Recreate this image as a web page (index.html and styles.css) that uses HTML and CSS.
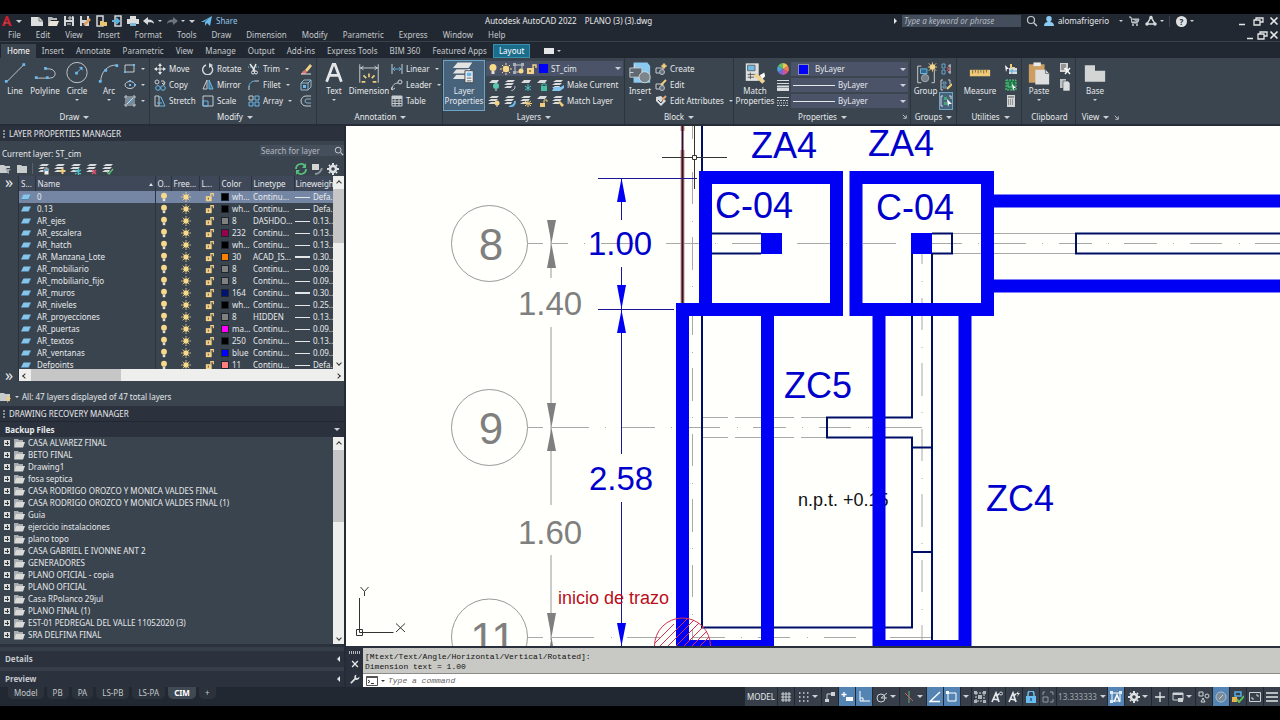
FILE: index.html
```html
<!DOCTYPE html>
<html lang="en">
<head>
    <meta charset="UTF-8">
    <meta name="viewport" content="width=device-width, initial-scale=1.0">
    <title>Autodesk AutoCAD 2022</title>
    <link rel="stylesheet" href="styles.css">
</head>
<body>
    <!-- Icon set -->
    <svg class="sprite" aria-hidden="true">
        <symbol id="logo" viewBox="0 0 12 12"><path d="M1 11L5 1h2l4 10H8L6 4.500 4 11z" fill="#c8202f"/><path d="M3 8h5" stroke="#e0525c"/></symbol>
        <symbol id="new" viewBox="0 0 12 12"><path d="M0 2h8l4 4v5H0z" fill="#dcdedd"/><path d="M8 2v4h4" fill="none" stroke="#777"/></symbol>
        <symbol id="open" viewBox="0 0 12 12"><path d="M1 11V2h4l1 1h4v2H4z" fill="#b9bcbd"/><path d="M3 6h9l-2 5H1z" fill="#e8e5d8"/></symbol>
        <symbol id="save" viewBox="0 0 12 12"><path d="M1 1h9l1 1v9H1z" fill="#d5d8da"/><path d="M3 1h6v4H3zM3 7h6v4H3z" fill="#2a3038"/><path d="M4 9h4M6 2h2v2H6z" stroke="#d5d8da"/></symbol>
        <symbol id="saveas" viewBox="0 0 12 12"><path d="M1 1h9v10H1z" fill="#d5d8da"/><path d="M3 1h5v4H3zM3 8h3v3H3z" fill="#2a3038"/><path d="M5 10l6-6" stroke="#e3a15e" stroke-width="2.500"/></symbol>
        <symbol id="mobile" viewBox="0 0 12 12"><path d="M2 1h6v10H2z" fill="none" stroke="#d5d8da" stroke-width="1.500"/><path d="M5 6h3l1 1h3v4H5z" fill="#e9c56e"/></symbol>
        <symbol id="mobile2" viewBox="0 0 12 12"><path d="M4 1h6v10H4z" fill="none" stroke="#d5d8da" stroke-width="1.500"/><path d="M1 6h6M5 3l3 3-3 3" fill="none" stroke="#5db3df" stroke-width="2"/></symbol>
        <symbol id="print" viewBox="0 0 12 12"><path d="M3 1h6v3H3zM0 4h12v5H0z" fill="#dcdedd"/><path d="M3 8h6v3H3z" fill="#7fb8da"/></symbol>
        <symbol id="undo" viewBox="0 0 12 12"><path d="M0 6l5-4v2.500c4 0 6 1.500 6 4.500-1-1.500-3-2-6-1.500V10z" fill="#d8dbde"/></symbol>
        <symbol id="redo" viewBox="0 0 12 12"><path d="M12 6L7 2v2.500C3 4.500 1 6 1 9c1-1.500 3-2 6-1.500V10z" fill="#6c747d"/></symbol>
        <symbol id="send" viewBox="0 0 12 12"><path d="M0 7L11 1 9 11 6 8l-2 3V7l4-4-5 4z" fill="#69b9ea"/></symbol>
        <symbol id="search" viewBox="0 0 12 12"><circle cx="5" cy="5" r="3.500" fill="none" stroke="#c5c9cd" stroke-width="1.200"/><path d="M8 8l3 3" stroke="#c5c9cd" stroke-width="1.500"/></symbol>
        <symbol id="user" viewBox="0 0 12 12"><path d="M6 1c4 0 3 5 1 6 3 0 4 2 4 4H1c0-2 1-4 4-4-2-1-3-6 1-6z" fill="#8bcbf3"/></symbol>
        <symbol id="cart" viewBox="0 0 12 12"><path d="M1 2h2l1 6h6M4 4h7l-1 3H4" fill="#9ea4aa" stroke="#c9cdd1"/><circle cx="5" cy="10" r="1" fill="#ccc"/><circle cx="9" cy="10" r="1" fill="#ccc"/></symbol>
        <symbol id="adsk" viewBox="0 0 12 12"><path d="M6 2L2 9h8z" fill="none" stroke="#d8dbde" stroke-width="1.500"/><circle cx="6" cy="2.500" r="1.700" fill="#d8dbde"/><circle cx="2" cy="9" r="1.700" fill="#d8dbde"/><circle cx="10" cy="9" r="1.700" fill="#d8dbde"/></symbol>
        <symbol id="min" viewBox="0 0 12 12"><path d="M3 9.500h6" stroke="#e4e6e8" stroke-width="1.500"/></symbol>
        <symbol id="restore" viewBox="0 0 12 12"><path d="M2 5h6v5H2zM4 5V3h7v4H8" fill="none" stroke="#e4e6e8" stroke-width="1.300"/></symbol>
        <symbol id="close" viewBox="0 0 12 12"><path d="M2.500 2.500l7 7M9.500 2.500l-7 7" stroke="#e4e6e8" stroke-width="1.600"/></symbol>

        <symbol id="line" viewBox="0 0 26 26"><path d="M4 22L23 3" stroke="#c7ccd0"/><path d="M2 20h3v3H2zM21 2h3v3h-3z" fill="#69b9ea"/></symbol>
        <symbol id="polyline" viewBox="0 0 26 26"><path d="M4 18h14c8 0 8-9 0-10h-5" fill="none" stroke="#c7ccd0"/><path d="M2 16h3v3H2zM14 16h3v3h-3zM12 6h3v3h-3z" fill="#69b9ea"/></symbol>
        <symbol id="circle" viewBox="0 0 26 26"><circle cx="13" cy="12" r="11" fill="none" stroke="#c7ccd0"/><path d="M13 12l5-5" stroke="#69b9ea"/><path d="M11 11h3v3h-3zM15 6h4v4z" fill="#69b9ea"/></symbol>
        <symbol id="arc" viewBox="0 0 26 26"><path d="M4 22C4 12 11 3 22 4" fill="none" stroke="#c7ccd0"/><path d="M2 20h3v3H2zM8 8h3v3H8zM20 3h3v3h-3z" fill="#69b9ea"/></symbol>
        <symbol id="text" viewBox="0 0 26 26"><path d="M5 22L12 3h2l7 19M8 15h10" fill="none" stroke="#e4e6e8" stroke-width="3"/></symbol>
        <symbol id="dim" viewBox="0 0 26 26"><path d="M3 3v20M23 3v20M3 7h20M7 5L4 7l3 2M19 5l3 2-3 2" fill="none" stroke="#cfd3d6"/><path d="M13 13v4M7 15l3 3M19 15l-3 3M5 22h4M17 22h4" stroke="#f0cd7d" stroke-width="1.800"/></symbol>
        <symbol id="layerprops" viewBox="0 0 26 26"><path d="M6 1h16l-4 6H1zM5 8h15l-3 5H1zM5 14h10v5H1z" fill="#e2e4e4"/><path d="M2 8h15M2 14h15" stroke="#55616c"/><path d="M14 10h9v13h-9z" fill="#f4f4f4" stroke="#3c4650"/><path d="M16 12h5v4h-5z" fill="#68b9e8"/><path d="M16 18h5M16 21h5" stroke="#555"/></symbol>
        <symbol id="insert" viewBox="0 0 26 26"><path d="M6 1h15l3 4v18H6z" fill="#8acaf0"/><path d="M2 7h13v10H2z" fill="#606972" stroke="#c7ccd0"/><circle cx="18" cy="17" r="6" fill="#7c858c" stroke="#d0d4d6"/><path d="M7 3v4M2 12h4" stroke="#d9dcde"/></symbol>
        <symbol id="match" viewBox="0 0 26 26"><path d="M3 2h14v19H3z" fill="#dfe1e1"/><path d="M5 4h8v6H5z" fill="#70bce4" stroke="#59636c"/><path d="M5 14h9M5 17h7M8 12v7" stroke="#555"/><path d="M11 15l4-2 9 8-3 3z" fill="#efd391"/><path d="M18 15l5-3 1 4-3 3z" fill="#fff"/></symbol>
        <symbol id="group" viewBox="0 0 26 26"><path d="M8 5H4v18h4M19 23h3V9" fill="none" stroke="#cfd3d6"/><path d="M7 8h7v5H7z" fill="#30678b" stroke="#71bce8"/><circle cx="12" cy="18" r="4" fill="#77808a" stroke="#a5abb0"/><path d="M20 1v10M15 6h10M16 2l8 8M24 2l-8 8" stroke="#f0cd7d"/><circle cx="20" cy="6" r="3" fill="#f5d78d"/></symbol>
        <symbol id="measure" viewBox="0 0 26 26"><path d="M2 9h22v7H2z" fill="#efc97a"/><path d="M5 9v4M8 9v3M11 9v4M14 9v3M17 9v4M20 9v3" stroke="#7c683d"/></symbol>
        <symbol id="paste" viewBox="0 0 26 26"><path d="M2 3h17v20H2z" fill="#cd9d62"/><path d="M7 1h8v4H7z" fill="#e9eaea"/><path d="M9 9h11l4 4v12H9z" fill="#dedfdf"/><path d="M20 9v4h4" fill="none" stroke="#777"/></symbol>
        <symbol id="base" viewBox="0 0 26 26"><path d="M2 4h11v6h11v12H2z" fill="#d3d5d5"/></symbol>

        <symbol id="rect" viewBox="0 0 12 12"><path d="M1 2h9v7H1z" fill="none" stroke="#c7ccd0"/><path d="M0 8h2v2H0zM9 1h2v2H9z" fill="#69b9ea"/></symbol>
        <symbol id="ellipse" viewBox="0 0 12 12"><ellipse cx="6" cy="6" rx="5" ry="3.500" fill="none" stroke="#c7ccd0"/><path d="M5 5h2v2H5zM5 1h2v2H5zM10 5h2v2h-2z" fill="#69b9ea"/></symbol>
        <symbol id="hatch" viewBox="0 0 12 12"><path d="M2 0v12M10 0v12M0 2h12M0 10h12" stroke="#c7ccd0"/><path d="M3 3h6v6H3z" fill="#718ca3"/><path d="M3 9l6-6" stroke="#b8dff6"/></symbol>
        <symbol id="move" viewBox="0 0 12 12"><path d="M6 1v10M1 6h10" stroke="#e4e6e8"/><path d="M6 0l2 3H4zM6 12l2-3H4zM0 6l3-2v4zM12 6L9 4v4z" fill="#e4e6e8"/></symbol>
        <symbol id="copy" viewBox="0 0 12 12"><circle cx="3" cy="3" r="2" fill="none" stroke="#c7ccd0"/><path d="M7 2h3v3M8 4l2 2 1-3" fill="none" stroke="#c7ccd0"/><circle cx="4" cy="9" r="2.300" fill="none" stroke="#69b9ea"/><circle cx="9" cy="9" r="2.300" fill="none" stroke="#69b9ea"/></symbol>
        <symbol id="stretch" viewBox="0 0 12 12"><path d="M1 1h4v10H1z" fill="none" stroke="#c7ccd0"/><path d="M5 2h2l4 9H5M3 8h5" fill="none" stroke="#69b9ea"/></symbol>
        <symbol id="rotate" viewBox="0 0 12 12"><path d="M9 3a5 5 0 1 1-5-1" fill="none" stroke="#d3d7da" stroke-width="1.400"/><path d="M7 0l4 2-4 3z" fill="#d3d7da"/></symbol>
        <symbol id="mirror" viewBox="0 0 12 12"><path d="M5 1v9H1z" fill="none" stroke="#c7ccd0"/><path d="M7 1v9h4z" fill="#3d708f" stroke="#69b9ea"/></symbol>
        <symbol id="scale" viewBox="0 0 12 12"><path d="M1 1h10v10H1z" fill="none" stroke="#c7ccd0"/><path d="M1 6h5v5H1z" fill="none" stroke="#69b9ea"/></symbol>
        <symbol id="trim" viewBox="0 0 12 12"><path d="M2 1l5 7M8 1L5 8" stroke="#e4e6e8" stroke-width="1.500"/><circle cx="5" cy="9.500" r="1.500" fill="none" stroke="#e4e6e8"/><circle cx="8" cy="9.500" r="1.500" fill="none" stroke="#e4e6e8"/><path d="M0 4h4M8 4h3" stroke="#69b9ea" stroke-dasharray="1 1"/></symbol>
        <symbol id="fillet" viewBox="0 0 12 12"><path d="M1 11V7" stroke="#c7ccd0"/><path d="M1 8c0-4 3-6 6-6" fill="none" stroke="#69b9ea"/><path d="M7 2h4" stroke="#c7ccd0"/></symbol>
        <symbol id="array" viewBox="0 0 12 12"><path d="M1 1h4v4H1z" fill="none" stroke="#c7ccd0"/><path d="M7 1h4v4H7zM1 7h4v4H1zM7 7h4v4H7z" fill="none" stroke="#69b9ea"/></symbol>
        <symbol id="erase" viewBox="0 0 12 12"><path d="M5 7l5-6 2 2-5 6z" fill="#f2d48a"/><path d="M3 8l2-1 2 2-2 2H1z" fill="#e2736e"/><path d="M1 11h10" stroke="#e4e6e8"/></symbol>
        <symbol id="explode" viewBox="0 0 12 12"><path d="M1 4h7v7H1zM1 4l3-3h7L8 4M11 1v7l-3 3" fill="none" stroke="#94b9d0"/><path d="M3 6h3v3H3z" fill="#69b9ea"/></symbol>
        <symbol id="offset" viewBox="0 0 12 12"><path d="M11 1H6a5 5 0 0 0 0 10h5" fill="none" stroke="#c7ccd0"/><path d="M11 4H7a2 2 0 0 0 0 4h4" fill="none" stroke="#89adc5"/></symbol>
        <symbol id="linear" viewBox="0 0 12 12"><path d="M1 1v10M11 1v10" stroke="#c7ccd0"/><path d="M1 6h10M4 4L2 6l2 2M8 4l2 2-2 2" fill="none" stroke="#69a6cc"/></symbol>
        <symbol id="leader" viewBox="0 0 12 12"><path d="M1 11C1 6 4 4 7 4" fill="none" stroke="#c7ccd0"/><circle cx="9" cy="3" r="2" fill="none" stroke="#c7ccd0"/><path d="M0 8l1 3 3-2" fill="none" stroke="#c7ccd0"/></symbol>
        <symbol id="table" viewBox="0 0 12 12"><path d="M1 1h10v10H1zM1 6h10M1 8.500h10M4 3v8M8 3v8" fill="none" stroke="#c7ccd0"/><path d="M1 1h10v3H1z" fill="#c7ccd0"/></symbol>
        <symbol id="layers" viewBox="0 0 12 12"><path d="M4 1h7L9 3H1zM3 4h7L8 6H0zM3 7h5L7 9H0z" fill="#d9dcdd"/></symbol>
        <symbol id="lay-bulb" viewBox="0 0 12 12"><use href="#layers"/><circle cx="9" cy="8" r="2.500" fill="#f5d584"/><path d="M9 10v2" stroke="#ddd"/></symbol>
        <symbol id="lay-on" viewBox="0 0 12 12"><path d="M4 1h7L9 4H1z" fill="#d9dcdd"/><circle cx="8" cy="7" r="3" fill="#59c8ae"/><path d="M8 10v2" stroke="#ddd"/></symbol>
        <symbol id="lay-iso" viewBox="0 0 12 12"><use href="#layers"/><path d="M7 12c3-1 4-2 4-5" fill="none" stroke="#b9c0c6"/></symbol>
        <symbol id="lay-isob" viewBox="0 0 12 12"><use href="#layers"/><path d="M5 12c4-1 6-2 6-6" fill="none" stroke="#69b9ea" stroke-width="2"/></symbol>
        <symbol id="lay-frz" viewBox="0 0 12 12"><path d="M4 1h7L9 4H1z" fill="#d9dcdd"/><path d="M8 5v7M5 7l6 4M11 7l-6 4" stroke="#4cc2c9"/></symbol>
        <symbol id="lay-sun" viewBox="0 0 12 12"><use href="#layers"/><path d="M8 5v7M4 8.500h8M5 6l6 5M11 6l-6 5" stroke="#f0cd7d"/></symbol>
        <symbol id="lay-lock" viewBox="0 0 12 12"><path d="M4 1h7L9 4H1z" fill="#d9dcdd"/><path d="M5 7h6v5H5z" fill="#47bfa5"/><path d="M6 7V5h4v2" fill="none" stroke="#47bfa5"/></symbol>
        <symbol id="lay-unlock" viewBox="0 0 12 12"><path d="M4 1h7L9 4H1z" fill="#d9dcdd"/><path d="M4 8h5v4H4z" fill="#f0cd7d"/><path d="M8 8V5h3v2" fill="none" stroke="#f0cd7d"/></symbol>
        <symbol id="lay-cur" viewBox="0 0 12 12"><use href="#layers"/><path d="M2 8h7l3-2v3l-4 3H0z" fill="#82c6ef"/></symbol>
        <symbol id="lay-match" viewBox="0 0 12 12"><use href="#layers"/><path d="M6 7l2-1 4 4-2 2z" fill="#f0cd7d"/></symbol>
        <symbol id="lay-new" viewBox="0 0 12 12"><use href="#layers"/><path d="M8.500 5v6M5.500 8h6" stroke="#f0cd7d" stroke-width="2"/></symbol>
        <symbol id="lay-newfrz" viewBox="0 0 12 12"><use href="#layers"/><path d="M8.500 5v7M5 7l6 4M11 7l-6 4" stroke="#4cc2c9" stroke-width="1.300"/></symbol>
        <symbol id="lay-del" viewBox="0 0 12 12"><use href="#layers"/><path d="M6 7l4 4M10 7l-4 4" stroke="#e2516e" stroke-width="1.500"/></symbol>
        <symbol id="lay-ok" viewBox="0 0 12 12"><use href="#layers"/><path d="M5 9l2 2 4-5" fill="none" stroke="#5fc077" stroke-width="1.300"/></symbol>
        <symbol id="lay-prop" viewBox="0 0 12 12"><use href="#layers"/><path d="M6 5h5v7H6z" fill="#eee" stroke="#444"/><path d="M7 6h3v2H7z" fill="#56a7d6"/></symbol>
        <symbol id="bulb" viewBox="0 0 12 12"><circle cx="6" cy="4.500" r="3.500" fill="#f8d98a"/><path d="M4.500 8h3v3h-3z" fill="#e6e2d2"/></symbol>
        <symbol id="sun" viewBox="0 0 12 12"><circle cx="6" cy="6" r="3.200" fill="#f8d98a"/><path d="M6 0v2M6 10v2M0 6h2M10 6h2M2 2l1.500 1.500M10 2L8.500 3.500M2 10l1.500-1.500M10 10L8.500 8.500" stroke="#f8d98a"/></symbol>
        <symbol id="unlock" viewBox="0 0 12 12"><path d="M1 5h7v6H1z" fill="#f5d28a"/><path d="M7 5V2h3v3" fill="none" stroke="#f5d28a" stroke-width="1.400"/><path d="M4 7v2" stroke="#6a5a35" stroke-width="1.300"/></symbol>
        <symbol id="vpfrz" viewBox="0 0 12 12"><path d="M2 2h7v7H2z" fill="none" stroke="#c7ccd0"/><path d="M0 0h3v3H0zM8 0h3v3H8zM0 8h3v3H0z" fill="#aab0b6"/><circle cx="8" cy="8" r="2.500" fill="#f8d98a"/></symbol>
        <symbol id="sheet" viewBox="0 0 12 12"><path d="M3 3h9L9 9H0z" fill="#86c6ec"/><path d="M0 9h9l3-6" fill="none" stroke="#4d7f9f"/></symbol>
        <symbol id="create" viewBox="0 0 12 12"><path d="M1 5h7v5H1z" fill="none" stroke="#c7ccd0"/><circle cx="7" cy="9" r="2.500" fill="#68727b" stroke="#b7bcc1"/><circle cx="9" cy="3" r="2" fill="#f0cd7d"/><path d="M9 0v6M6 3h6" stroke="#f0cd7d"/></symbol>
        <symbol id="edit" viewBox="0 0 12 12"><path d="M1 5h7v5H1z" fill="none" stroke="#c7ccd0"/><circle cx="7" cy="9" r="2.500" fill="#68727b" stroke="#b7bcc1"/><path d="M6 6l5-5" stroke="#f0cd7d" stroke-width="2"/></symbol>
        <symbol id="editattr" viewBox="0 0 12 12"><path d="M1 2l5-1 5 5-5 5-5-5z" fill="#d8dbde"/><path d="M3 5l3 3 3-5" fill="none" stroke="#3b444e"/><path d="M7 5l4-4" stroke="#e8a774" stroke-width="2"/></symbol>
        <symbol id="wheel" viewBox="0 0 12 12"><path d="M6 6V0a6 6 0 0 1 5 3z" fill="#f4c04e"/><path d="M6 6l5-3a6 6 0 0 1 0 6z" fill="#ef7c55"/><path d="M6 6l5 3a6 6 0 0 1-5 3z" fill="#d2548e"/><path d="M6 6v6a6 6 0 0 1-5-3z" fill="#7a65d8"/><path d="M6 6L1 9a6 6 0 0 1 0-6z" fill="#4aa3dd"/><path d="M6 6L1 3a6 6 0 0 1 5-3z" fill="#61bd6a"/></symbol>
        <symbol id="weights" viewBox="0 0 12 12"><path d="M0 1.500h12M0 4.500h12" stroke="#d8dbde"/><path d="M0 7.500h12" stroke="#d8dbde" stroke-width="2"/><path d="M0 10.500h12" stroke="#d8dbde" stroke-width="3"/></symbol>
        <symbol id="types" viewBox="0 0 12 12"><path d="M0 2.500h12" stroke="#c7ccd0"/><path d="M0 5.500h12M0 10.500h12" stroke="#c7ccd0" stroke-dasharray="2 1"/><path d="M0 8h12" stroke="#c7ccd0" stroke-dasharray="1 1"/></symbol>
        <symbol id="ungroup" viewBox="0 0 12 12"><path d="M2 1h3v4H2zM2 7h3v4H2z" fill="none" stroke="#69a6cc"/><path d="M10 1v10M8 3h3M8 9h3" stroke="#c7ccd0"/><path d="M7 4l3 4M10 4L7 8" stroke="#d9536a"/></symbol>
        <symbol id="groupedit" viewBox="0 0 12 12"><path d="M3 1H1v10h2M8 1h2v4" fill="none" stroke="#c7ccd0"/><path d="M3 3h3v2H3zM3 7h3v2H3z" fill="none" stroke="#69a6cc"/><path d="M7 10l5-5" stroke="#f0cd7d" stroke-width="2"/></symbol>
        <symbol id="groupsel" viewBox="0 0 12 12"><path d="M3 1H1v10h2M9 1h2v3" fill="none" stroke="#d8dbde"/><path d="M4 2h3v3H4zM4 7h3v3H4z" fill="#46a678"/><path d="M7 4l5 5H9l-1 3z" fill="#fff"/></symbol>
        <symbol id="quick" viewBox="0 0 12 12"><path d="M0 2l4 4H2l-1 3z" fill="#fff"/><path d="M6 1v4h4" fill="none" stroke="#f0cd7d" stroke-width="2"/><path d="M4 5h8v6H4z" fill="#d9dcdd"/><path d="M7 6v5M4 8h8" stroke="#5ba6d1"/></symbol>
        <symbol id="selall" viewBox="0 0 12 12"><path d="M1 1h10v10H1z" fill="#22764a" stroke="#5acb87" stroke-dasharray="2 1"/><path d="M3 3v5h4V3" fill="none" stroke="#5acb87"/><path d="M7 5l4 4H9l-1 3z" fill="#fff"/></symbol>
        <symbol id="calc" viewBox="0 0 12 12"><path d="M2 0h8v12H2z" fill="#d3d5d5"/><path d="M3 2h6" stroke="#555"/><path d="M3 5h6M3 7h6M3 9h6" stroke="#555" stroke-dasharray="1 1"/></symbol>
        <symbol id="cut" viewBox="0 0 12 12"><path d="M1 0h8v9H1z" fill="#d3d5d5"/><path d="M2 2h5M2 4h5M2 6h3" stroke="#555"/><path d="M6 5l5 6M11 5l-5 6" stroke="#fff" stroke-width="1.300"/></symbol>
        <symbol id="pages" viewBox="0 0 12 12"><path d="M1 0h6v9H1z" fill="#bfc2c4"/><path d="M4 2h5l2 2v8H4z" fill="#dcdede" stroke="#3b444e" stroke-width=".6"/></symbol>
        <symbol id="launch" viewBox="0 0 12 12"><path d="M3 3l5 5M9 4v5H4" fill="none" stroke="#cdd1d5" stroke-width="1.500"/></symbol>

        <symbol id="filter" viewBox="0 0 12 12"><path d="M0 2h4l1 1h5v2H6l2 2v3H0z" fill="#c9cccd"/><path d="M5 6h6L9 8v3L7 10V8z" fill="#9ca2a8"/></symbol>
        <symbol id="folder" viewBox="0 0 12 12"><path d="M1 2h4l1 1h5v7H1z" fill="#c9cccd"/></symbol>
        <symbol id="folderopen" viewBox="0 0 12 12"><path d="M1 10V2h4l1 1h4v2H4z" fill="#a9adb0"/><path d="M3 5h9l-2 5.500H1z" fill="#d9dad8"/></symbol>
        <symbol id="folderbolt" viewBox="0 0 12 12"><path d="M0 2h4l1 1h5v7H0z" fill="#c9cccd"/><path d="M9 4L6 8h2l-1 4 4-5H9z" fill="#f5cf6a"/></symbol>
        <symbol id="refresh" viewBox="0 0 12 12"><path d="M1 6a5 5 0 0 1 9-3M11 6a5 5 0 0 1-9 3" fill="none" stroke="#58bf7c" stroke-width="1.800"/><path d="M11 0v5H7zM1 12V7h4z" fill="#58bf7c"/></symbol>
        <symbol id="settings" viewBox="0 0 12 12"><path d="M1 1h7v6H1z" fill="#d3d5d5"/><path d="M4 11c4 0 6-3 7-6" fill="none" stroke="#8c949c" stroke-width="2"/></symbol>
        <symbol id="gear" viewBox="0 0 12 12"><circle cx="6" cy="6" r="3" fill="none" stroke="#dfe2e4" stroke-width="2.400"/><path d="M6 0v2M6 10v2M0 6h2M10 6h2M2 2l1 1M9 9l1 1M10 2L9 3M3 9l-1 1" stroke="#dfe2e4" stroke-width="2"/></symbol>
        <symbol id="wrench" viewBox="0 0 12 12"><path d="M1 11l6-6" stroke="#dfe2e4" stroke-width="2"/><path d="M11 3a3 3 0 1 1-3-2L7 3l1 2 2-.5z" fill="#dfe2e4"/></symbol>
        <symbol id="prompt" viewBox="0 0 12 12"><path d="M.5 1.500h11v9H.5z" fill="#fff" stroke="#555"/><path d="M.5 2h11" stroke="#555" stroke-width="2"/><path d="M2 5l2 1.500L2 8M5 8.500h3" fill="none" stroke="#333"/></symbol>

        <symbol id="s-grid" viewBox="0 0 12 12"><path d="M3 1v10M6 1v10M9 1v10M1 3h10M1 6h10M1 9h10" stroke="#cfd3d6"/></symbol>
        <symbol id="s-snap" viewBox="0 0 12 12"><path d="M1 2h10M1 6h10M1 10h10" stroke="#cfd3d6" stroke-width="1.500" stroke-dasharray="1.500 2.500"/></symbol>
        <symbol id="s-infer" viewBox="0 0 12 12"><path d="M1 8h4v3H1zM7 1h4v4H7z" fill="#cfd3d6"/><path d="M3 8V3h4" fill="none" stroke="#cfd3d6"/></symbol>
        <symbol id="s-dyn" viewBox="0 0 12 12"><path d="M3 1v5M.5 3.500h5" stroke="#fff" stroke-width="1.300"/><path d="M5 6h7v4H5z" fill="#fff"/></symbol>
        <symbol id="s-ortho" viewBox="0 0 12 12"><path d="M2 0v10h10M2 7h3v3" fill="none" stroke="#fff"/></symbol>
        <symbol id="s-polar" viewBox="0 0 12 12"><circle cx="5" cy="7" r="4" fill="none" stroke="#cfd3d6"/><path d="M5 7l6-5M5 7h6" stroke="#cfd3d6"/></symbol>
        <symbol id="s-iso" viewBox="0 0 12 12"><path d="M6 0v12" stroke="#64b36d"/><path d="M2 2l8 8" stroke="#c96568"/></symbol>
        <symbol id="s-track" viewBox="0 0 12 12"><path d="M11 1L1 10.500h10" fill="none" stroke="#fff" stroke-width="1.300"/></symbol>
        <symbol id="s-osnap" viewBox="0 0 12 12"><path d="M2 2h8v8H2z" fill="none" stroke="#fff"/><path d="M0 0h3v3H0z" fill="#fff"/></symbol>
        <symbol id="s-sel" viewBox="0 0 12 12"><path d="M2 2h8v8H2z" fill="none" stroke="#cfd3d6" stroke-dasharray="2 1"/><path d="M0 0h3v3H0zM9 0h3v3H9zM0 9h3v3H0zM9 9h3v3H9zM4 4h4v4H4z" fill="#aeb4ba"/></symbol>
        <symbol id="s-anno" viewBox="0 0 12 12"><path d="M1 11L5 2l3 9M3 8l4 1M5 5l3-2" fill="none" stroke="#e4e6e8" stroke-width="1.700"/><circle cx="10" cy="2.500" r="1.500" fill="none" stroke="#cfd3d6"/></symbol>
        <symbol id="s-annoauto" viewBox="0 0 12 12"><path d="M1 11L5 2l3 9M3 8l4 1M5 5l3-2" fill="none" stroke="#e4e6e8" stroke-width="1.700"/><path d="M10.500 0L8 3h2L9 6l3-4h-2z" fill="#e4e6e8"/></symbol>
        <symbol id="s-lock" viewBox="0 0 12 12"><path d="M1 5h10v7H1z" fill="#69bdf0"/><path d="M3 5V3a3 3 0 0 1 6 0v2" fill="none" stroke="#69bdf0" stroke-width="1.500"/><path d="M6 7v3" stroke="#275a7e" stroke-width="1.500"/></symbol>
        <symbol id="s-scale" viewBox="0 0 12 12"><path d="M3 1H1v3M8 1h3v3M11 8v3H8M1 6h5v5H1z" fill="none" stroke="#9299a0"/></symbol>
        <symbol id="s-auto" viewBox="0 0 12 12"><path d="M2 2h8v8H2z" fill="none" stroke="#fff"/><path d="M0 0h3v3H0zM9 0h3v3H9zM0 9h3v3H0z" fill="#dcebf7"/><path d="M4 11l3-7 3 7" fill="none" stroke="#fff" stroke-width="1.500"/></symbol>
        <symbol id="s-plus" viewBox="0 0 12 12"><path d="M6 1v10M1 6h10" stroke="#e4e6e8" stroke-width="1.300"/></symbol>
        <symbol id="s-win" viewBox="0 0 12 12"><path d="M1 2h10v7H1z" fill="none" stroke="#cfd3d6"/><path d="M1 2h10v2H1z" fill="#cfd3d6"/><path d="M6 7h5v4H6z" fill="#cfd3d6"/></symbol>
        <symbol id="s-units" viewBox="0 0 12 12"><path d="M1 1h4v4H1zM3 11l2-4 2 4z" fill="none" stroke="#cfd3d6"/><circle cx="9" cy="5" r="2" fill="none" stroke="#cfd3d6"/></symbol>
        <symbol id="s-circ" viewBox="0 0 12 12"><circle cx="6" cy="6" r="5" fill="#7c8b98" stroke="#a9bfd3"/><path d="M4 8l4-4" stroke="#c7d6e3"/></symbol>
        <symbol id="s-hw" viewBox="0 0 12 12"><path d="M3 1h6v4H3z" fill="none" stroke="#5aaee0" stroke-width="1.500"/><path d="M0 6h5v5H0z" fill="#e8b64c"/><path d="M5 8l2 3 5-6" fill="none" stroke="#5fc35f" stroke-width="1.800"/></symbol>
        <symbol id="s-full" viewBox="0 0 12 12"><path d="M.5 1.500h11v9H.5z" fill="none" stroke="#cfd3d6"/><path d="M7 4h2v2M3 6v2h2" fill="none" stroke="#cfd3d6"/></symbol>
        <symbol id="s-menu" viewBox="0 0 12 12"><path d="M0 2h12M0 6h12M0 10h12" stroke="#e4e6e8" stroke-width="1.400"/></symbol>
    </svg>

    <div class="app">
        <header class="titlebar">
            <div class="quick">
                <button class="logo" aria-label="Application menu"><svg class="ic"><use href="#logo"/></svg><i class="caret"></i></button>
                <button aria-label="New"><svg class="ic"><use href="#new"/></svg></button>
                <button aria-label="Open"><svg class="ic"><use href="#open"/></svg></button>
                <button aria-label="Save"><svg class="ic"><use href="#save"/></svg></button>
                <button aria-label="Save as"><svg class="ic"><use href="#saveas"/></svg></button>
                <button aria-label="Open from mobile"><svg class="ic"><use href="#mobile"/></svg></button>
                <button aria-label="Save to mobile"><svg class="ic"><use href="#mobile2"/></svg></button>
                <button aria-label="Plot"><svg class="ic"><use href="#print"/></svg></button>
                <button aria-label="Undo"><svg class="ic"><use href="#undo"/></svg><i class="caret small"></i></button>
                <button aria-label="Redo"><svg class="ic"><use href="#redo"/></svg><i class="caret small"></i></button>
                <button aria-label="Customize"><i class="caret"></i></button>
                <button class="share"><svg class="ic"><use href="#send"/></svg>Share</button>
            </div>
            <div class="doc-title"><span>Autodesk AutoCAD 2022</span><span>PLANO (3) (3).dwg</span></div>
            <div class="account">
                <i class="caret right"></i>
                <input type="text" placeholder="Type a keyword or phrase" aria-label="Search help">
                <button aria-label="Search"><svg class="ic"><use href="#search"/></svg></button>
                <button class="user"><svg class="ic"><use href="#user"/></svg>alomafrigerio<i class="caret small"></i></button>
                <button aria-label="Store"><svg class="ic"><use href="#cart"/></svg></button>
                <button aria-label="Apps"><svg class="ic"><use href="#adsk"/></svg><i class="caret small"></i></button>
                <button class="help" aria-label="Help"><b>?</b><i class="caret small"></i></button>
                <div class="window-buttons">
                    <button aria-label="Minimize"><svg class="ic"><use href="#min"/></svg></button>
                    <button aria-label="Restore"><svg class="ic"><use href="#restore"/></svg></button>
                    <button aria-label="Close"><svg class="ic"><use href="#close"/></svg></button>
                </div>
            </div>
        </header>

        <nav class="menubar">
            <a href="#">File</a><a href="#">Edit</a><a href="#">View</a><a href="#">Insert</a><a href="#">Format</a><a href="#">Tools</a><a href="#">Draw</a><a href="#">Dimension</a><a href="#">Modify</a><a href="#">Parametric</a><a href="#">Express</a><a href="#">Window</a><a href="#">Help</a>
            <div class="doc-buttons">
                <button aria-label="Minimize drawing"><svg class="ic"><use href="#min"/></svg></button>
                <button aria-label="Restore drawing"><svg class="ic"><use href="#restore"/></svg></button>
                <button aria-label="Close drawing"><svg class="ic"><use href="#close"/></svg></button>
            </div>
        </nav>

        <nav class="tabs">
            <button class="active">Home</button><button>Insert</button><button>Annotate</button><button>Parametric</button><button>View</button><button>Manage</button><button>Output</button><button>Add-ins</button><button>Express Tools</button><button>BIM 360</button><button>Featured Apps</button><button class="context">Layout</button>
            <button class="collapse" aria-label="Minimize ribbon"><span></span><i class="caret small"></i></button>
        </nav>

        <section class="ribbon">
            <div class="panel p-draw">
                <div class="panel-body">
                    <button class="big"><svg><use href="#line"/></svg>Line</button>
                    <button class="big"><svg><use href="#polyline"/></svg>Polyline</button>
                    <button class="big wide"><svg><use href="#circle"/></svg>Circle<i class="caret small"></i></button>
                    <button class="big"><svg><use href="#arc"/></svg>Arc<i class="caret small"></i></button>
                    <div class="col">
                        <button aria-label="Rectangle"><svg class="ic"><use href="#rect"/></svg><i class="caret small"></i></button>
                        <button aria-label="Ellipse"><svg class="ic"><use href="#ellipse"/></svg><i class="caret small"></i></button>
                        <button aria-label="Hatch"><svg class="ic"><use href="#hatch"/></svg><i class="caret small"></i></button>
                    </div>
                </div>
                <div class="panel-title">Draw<i class="caret"></i></div>
            </div>
            <div class="panel p-modify">
                <div class="panel-body">
                    <div class="col w48">
                        <button><svg class="ic"><use href="#move"/></svg>Move</button>
                        <button><svg class="ic"><use href="#copy"/></svg>Copy</button>
                        <button><svg class="ic"><use href="#stretch"/></svg>Stretch</button>
                    </div>
                    <div class="col w46">
                        <button><svg class="ic"><use href="#rotate"/></svg>Rotate</button>
                        <button><svg class="ic"><use href="#mirror"/></svg>Mirror</button>
                        <button><svg class="ic"><use href="#scale"/></svg>Scale</button>
                    </div>
                    <div class="col w46">
                        <button><svg class="ic"><use href="#trim"/></svg>Trim<i class="caret small"></i></button>
                        <button><svg class="ic"><use href="#fillet"/></svg>Fillet<i class="caret small"></i></button>
                        <button><svg class="ic"><use href="#array"/></svg>Array<i class="caret small"></i></button>
                    </div>
                    <div class="col end">
                        <button aria-label="Erase"><svg class="ic"><use href="#erase"/></svg></button>
                        <button aria-label="Explode"><svg class="ic"><use href="#explode"/></svg></button>
                        <button aria-label="Offset"><svg class="ic"><use href="#offset"/></svg></button>
                    </div>
                </div>
                <div class="panel-title">Modify<i class="caret"></i></div>
            </div>
            <div class="panel p-annotation">
                <div class="panel-body">
                    <button class="big"><svg><use href="#text"/></svg>Text<i class="caret small"></i></button>
                    <button class="big wider"><svg><use href="#dim"/></svg>Dimension</button>
                    <div class="col">
                        <button><svg class="ic"><use href="#linear"/></svg>Linear<i class="caret small"></i></button>
                        <button><svg class="ic"><use href="#leader"/></svg>Leader<i class="caret small"></i></button>
                        <button><svg class="ic"><use href="#table"/></svg>Table</button>
                    </div>
                </div>
                <div class="panel-title">Annotation<i class="caret"></i></div>
            </div>
            <div class="panel p-layers">
                <div class="panel-body">
                    <button class="big wider on"><svg><use href="#layerprops"/></svg>Layer<br>Properties</button>
                    <div class="layer-tools">
                        <div class="combo">
                            <svg class="ic"><use href="#bulb"/></svg><svg class="ic"><use href="#sun"/></svg><svg class="ic"><use href="#vpfrz"/></svg><svg class="ic"><use href="#unlock"/></svg>
                            <span class="swatch blue"></span>
                            <select aria-label="Current layer"><option>ST_cim</option></select><i class="caret"></i>
                        </div>
                        <div class="tool-row">
                            <button aria-label="Off"><svg class="ic"><use href="#lay-on"/></svg></button>
                            <button aria-label="Isolate"><svg class="ic"><use href="#lay-iso"/></svg></button>
                            <button aria-label="Freeze"><svg class="ic"><use href="#lay-frz"/></svg></button>
                            <button aria-label="Lock"><svg class="ic"><use href="#lay-lock"/></svg></button>
                            <button><svg class="ic"><use href="#lay-cur"/></svg>Make Current</button>
                        </div>
                        <div class="tool-row">
                            <button aria-label="Turn all on"><svg class="ic"><use href="#lay-bulb"/></svg></button>
                            <button aria-label="Unisolate"><svg class="ic"><use href="#lay-isob"/></svg></button>
                            <button aria-label="Thaw all"><svg class="ic"><use href="#lay-sun"/></svg></button>
                            <button aria-label="Unlock"><svg class="ic"><use href="#lay-unlock"/></svg></button>
                            <button><svg class="ic"><use href="#lay-match"/></svg>Match Layer</button>
                        </div>
                    </div>
                </div>
                <div class="panel-title">Layers<i class="caret"></i></div>
            </div>
            <div class="panel p-block">
                <div class="panel-body">
                    <button class="big"><svg><use href="#insert"/></svg>Insert<i class="caret small"></i></button>
                    <div class="col">
                        <button><svg class="ic"><use href="#create"/></svg>Create</button>
                        <button><svg class="ic"><use href="#edit"/></svg>Edit</button>
                        <button><svg class="ic"><use href="#editattr"/></svg>Edit Attributes<i class="caret small"></i></button>
                    </div>
                </div>
                <div class="panel-title">Block<i class="caret"></i></div>
            </div>
            <div class="panel p-properties">
                <div class="panel-body">
                    <button class="big wider"><svg><use href="#match"/></svg>Match<br>Properties</button>
                    <div class="props">
                        <div class="prop-row"><svg class="ic"><use href="#wheel"/></svg><div class="combo"><span class="swatch blue"></span><select aria-label="Object color"><option>ByLayer</option></select><i class="caret"></i></div></div>
                        <div class="prop-row"><svg class="ic"><use href="#weights"/></svg><div class="combo"><span class="rule"></span><select aria-label="Lineweight"><option>ByLayer</option></select><i class="caret"></i></div></div>
                        <div class="prop-row"><svg class="ic"><use href="#types"/></svg><div class="combo"><span class="rule"></span><select aria-label="Linetype"><option>ByLayer</option></select><i class="caret"></i></div></div>
                    </div>
                </div>
                <div class="panel-title">Properties<i class="caret"></i></div>
                <button class="launcher" aria-label="Properties palette"><svg><use href="#launch"/></svg></button>
            </div>
            <div class="panel p-groups">
                <div class="panel-body">
                    <button class="big"><svg><use href="#group"/></svg>Group</button>
                    <div class="col end">
                        <button aria-label="Ungroup"><svg class="ic"><use href="#ungroup"/></svg></button>
                        <button aria-label="Group edit"><svg class="ic"><use href="#groupedit"/></svg></button>
                        <button class="on" aria-label="Group selection"><svg class="ic"><use href="#groupsel"/></svg></button>
                    </div>
                </div>
                <div class="panel-title">Groups<i class="caret"></i></div>
            </div>
            <div class="panel p-utilities">
                <div class="panel-body">
                    <button class="big wider"><svg><use href="#measure"/></svg>Measure<i class="caret small"></i></button>
                    <div class="col end">
                        <button aria-label="Quick select"><svg class="ic"><use href="#quick"/></svg></button>
                        <button aria-label="Select all"><svg class="ic"><use href="#selall"/></svg></button>
                        <button aria-label="Calculator"><svg class="ic"><use href="#calc"/></svg></button>
                    </div>
                </div>
                <div class="panel-title">Utilities<i class="caret"></i></div>
            </div>
            <div class="panel p-clipboard">
                <div class="panel-body">
                    <button class="big"><svg><use href="#paste"/></svg>Paste<i class="caret small"></i></button>
                    <div class="col end">
                        <button aria-label="Cut"><svg class="ic"><use href="#cut"/></svg></button>
                        <button aria-label="Copy clip"><svg class="ic"><use href="#pages"/></svg></button>
                    </div>
                </div>
                <div class="panel-title">Clipboard</div>
            </div>
            <div class="panel p-view">
                <div class="panel-body">
                    <button class="big"><svg><use href="#base"/></svg>Base<i class="caret small"></i></button>
                </div>
                <div class="panel-title">View<i class="caret"></i><svg><use href="#launch"/></svg></div>
            </div>
        </section>

        <main class="workspace">
            <aside class="palettes">
                <h2 class="palette-title"><i class="handle"></i>LAYER PROPERTIES MANAGER</h2>
                <div class="layer-head">
                    <span>Current layer: ST_cim</span>
                    <label class="layer-search"><input type="text" placeholder="Search for layer" aria-label="Search for layer"><svg class="ic"><use href="#search"/></svg></label>
                </div>
                <div class="layer-toolbar">
                    <button aria-label="New property filter"><svg class="ic"><use href="#filter"/></svg></button>
                    <button aria-label="New group filter"><svg class="ic"><use href="#folder"/></svg></button>
                    <i class="sep"></i>
                    <button aria-label="Layer states"><svg class="ic"><use href="#lay-prop"/></svg></button>
                    <button aria-label="New layer"><svg class="ic"><use href="#lay-new"/></svg></button>
                    <button aria-label="New frozen layer"><svg class="ic"><use href="#lay-newfrz"/></svg></button>
                    <button aria-label="Delete layer"><svg class="ic"><use href="#lay-del"/></svg></button>
                    <button aria-label="Set current"><svg class="ic"><use href="#lay-ok"/></svg></button>
                    <button class="push" aria-label="Refresh"><svg class="ic"><use href="#refresh"/></svg></button>
                    <button aria-label="Overrides"><svg class="ic"><use href="#settings"/></svg></button>
                    <button aria-label="Settings"><svg class="ic"><use href="#gear"/></svg></button>
                </div>
                <div class="layer-area">
                    <div class="filter-strip"><span>&raquo;</span><span>&raquo;</span></div>
                    <div class="layer-list">
                        <div class="list-view">
                            <div class="table-clip">
                                <table>
                                    <colgroup><col class="c-status"><col class="c-name"><col class="c-on"><col class="c-freeze"><col class="c-lock"><col class="c-color"><col class="c-type"><col class="c-weight"></colgroup>
                                    <thead><tr><th>S...</th><th class="sorted">Name</th><th>O...</th><th>Free...</th><th>L...</th><th>Color</th><th>Linetype</th><th>Lineweigh</th></tr></thead>
                                    <tbody id="layerRows"></tbody>
                                </table>
                            </div>
                            <div class="vscroll"><i class="chev up"></i><span class="thumb"></span><i class="chev down"></i></div>
                        </div>
                        <div class="hscroll"><i class="chev left"></i><span class="thumb"></span><i class="chev right"></i></div>
                    </div>
                </div>
                <div class="layer-foot"><svg class="ic"><use href="#folderbolt"/></svg><i class="caret small"></i><span>All: 47 layers displayed of 47 total layers</span></div>

                <h2 class="palette-title"><i class="handle"></i>DRAWING RECOVERY MANAGER</h2>
                <h3 class="section-title">Backup Files<i class="caret"></i></h3>
                <div class="list-view backup">
                    <ul id="backupFiles"></ul>
                    <div class="vscroll"><i class="chev up"></i><span class="thumb"></span><i class="chev down"></i></div>
                </div>
                <h3 class="section-title closed">Details<i class="caret left"></i></h3>
                <h3 class="section-title closed">Preview<i class="caret left"></i></h3>
            </aside>

            <div class="stage">
                <svg class="drawing" viewBox="346 126 934 520" preserveAspectRatio="xMinYMin slice" role="img" aria-label="Foundation plan">
                    <!-- axes -->
                    <g class="axis">
                        <path d="M528 243.500h15M551 243.500h17M584 243.500h1M601 243.500h33M666 243.500h34M715 243.500h1M732 243.500h33M797 243.500h35M846 243.500h1M863 243.500h33M932 243.500h30M978 243.500h1M994 243.500h32M1042 243.500h1M1059 243.500h33M1108 243.500h1M1124 243.500h33M1173 243.500h1M1190 243.500h32M1239 243.500h1M1255 243.500h25"/>
                        <path d="M528 427.500h15M551 427.500h38M605 427.500h1M622 427.500h33M671 427.500h1M688 427.500h32M737 427.500h1M753 427.500h33M802 427.500h1M819 427.500h32M868 427.500h1M885 427.500h37"/>
                        <path d="M528 637.500h15M551 637.500h43M611 637.500h1M627 637.500h33M676 637.500h1M692 637.500h33M741 637.500h1M758 637.500h32M807 637.500h1M824 637.500h32M890 637.500h41"/>
                        <path d="M692.500 126v13M692.500 172v32M692.500 221v1M692.500 237v33M692.500 286v1M692.500 303v32M692.500 352v1M692.500 368v33M692.500 417v1M692.500 434v32M692.500 483v1M692.500 499v33M692.500 548v1M692.500 565v32M692.500 614v1M692.500 630v10"/>
                        <path d="M922 254v10M922 281v1M922 298v32M922 347v1M922 363v33M922 412v1M922 429v32M922 478v1M922 494v33M922 543v1M922 560v32M922 609v1M922 625v15"/>
                        <path d="M952 233.500h124M952 253.500h124" />
                        <path d="M702 417.500h125M702 437.500h125" stroke-dasharray="26 7"/>
                    </g>
                    <!-- grid bubbles and grey dimensions -->
                    <g class="bubble">
                        <circle cx="489.500" cy="243.500" r="38"/><circle cx="489.500" cy="427.500" r="38"/><circle cx="489.500" cy="637" r="38"/>
                        <path d="M551 220v58M551 327v178M551 555v85"/>
                    </g>
                    <path class="grey-fill" d="M547 220h9l-4.500 23zM547 268h9l-4.500-24zM547 403h9l-4.500 24zM547 451h9l-4.500-23zM547 613h9l-4.500 24zM550 646l1.500-9 1.500 9z"/>
                    <g class="grey-text">
                        <text class="axis-no" x="491" y="260">8</text><text class="axis-no" x="491" y="444">9</text><text class="axis-no" x="493" y="654">11</text>
                        <text class="dim-no" x="550" y="315">1.40</text><text class="dim-no" x="550" y="544">1.60</text>
                    </g>
                    <text class="note" x="798" y="506">n.p.t. +0.15</text>
                    <!-- walls -->
                    <path d="M682.500 126v5M682.500 150v153" stroke="#c39a84" stroke-width="4"/>
                    <path d="M682.500 126v177" stroke="#3b0e31" stroke-width="2"/>
                    <path class="wall" d="M702 126v501.500h210V437.500h-85V417.500h85V253M932 253v387M712 233.500h49M712 253.500h49M932 233.500h20v20h-20M912 447.500h20M912 552h20M1280 233.500h-204v20h204"/>
                    <!-- footings -->
                    <g class="footing">
                        <rect x="705.500" y="177.500" width="131" height="132"/>
                        <rect x="856" y="177.500" width="131.500" height="132"/>
                        <path d="M682.500 303v343.500h85V309M879 309v337.500h86V309M676 309.500h30M994 201h286M994 286h286"/>
                    </g>
                    <path class="column" d="M761 233h21v21h-21zM911 233h21v21h-21z"/>
                    <!-- blue dimensions -->
                    <path class="dim" d="M598 178.500h99M598 309.500h76M621.500 178v42M621.500 267v187M621.500 502v144"/>
                    <path class="column" d="M617 202h9l-4.500-24zM617 285h9l-4.500 24zM617 333h9l-4.500-23zM617 623h9l-4.500 23z"/>
                    <g class="blue-text">
                        <text class="dim-no" x="620" y="255">1.00</text><text class="dim-no" x="621" y="490">2.58</text>
                        <text x="751" y="158">ZA4</text><text x="868" y="156">ZA4</text><text x="715" y="218">C-04</text><text x="876" y="220">C-04</text><text x="784" y="398">ZC5</text><text x="986" y="511">ZC4</text>
                    </g>
                    <!-- start point -->
                    <g class="start">
                        <circle cx="682.500" cy="646" r="28"/>
                        <path d="M655 643l19-19M657 649l30-30M665 649l29-29M673 649l26-26M681 649l22-22M689 649l18-18M697 649l12-12"/>
                        <text x="558" y="604">inicio de trazo</text>
                    </g>
                    <!-- UCS icon and crosshair -->
                    <g class="cursor">
                        <path d="M359.500 598v34.500h34M356.500 629.500h6v6h-6zM360.500 587l4 4.500 4-4.500M364.500 591.500v4.500M396 623.500l9 8.500M405 623.500l-9 8.500"/>
                        <path d="M662 157.500h30M697 157.500h30M694.500 126v29M694.500 160v29M692.500 155.500h4v4h-4z"/>
                    </g>
                </svg>
                <div class="command">
                    <div class="command-side"><i class="grip"></i><button aria-label="Close command line"><svg class="ic"><use href="#close"/></svg></button><button aria-label="Customize"><svg class="ic"><use href="#wrench"/></svg></button></div>
                    <div class="command-main">
                        <div class="history">[Mtext/Text/Angle/Horizontal/Vertical/Rotated]:<br>Dimension text = 1.00</div>
                        <div class="command-line"><svg class="ic"><use href="#prompt"/></svg><i class="caret small"></i><input type="text" placeholder="Type a command" aria-label="Command"></div>
                    </div>
                </div>
            </div>
        </main>

        <footer class="statusbar">
            <div class="layouts">
                <button>Model</button><button>PB</button><button>PA</button><button>LS-PB</button><button>LS-PA</button><button class="active">CIM</button><button>+</button>
            </div>
            <div class="tray">
                <button class="label">MODEL</button>
                <button aria-label="Grid"><svg class="ic"><use href="#s-grid"/></svg></button>
                <button class="drop" aria-label="Snap"><svg class="ic"><use href="#s-snap"/></svg><i class="caret"></i></button>
                <button aria-label="Infer constraints"><svg class="ic"><use href="#s-infer"/></svg></button>
                <button class="on" aria-label="Dynamic input"><svg class="ic"><use href="#s-dyn"/></svg></button>
                <button class="on" aria-label="Ortho"><svg class="ic"><use href="#s-ortho"/></svg></button>
                <button class="drop" aria-label="Polar"><svg class="ic"><use href="#s-polar"/></svg><i class="caret"></i></button>
                <button class="drop" aria-label="Isodraft"><svg class="ic"><use href="#s-iso"/></svg><i class="caret"></i></button>
                <button class="on" aria-label="Tracking"><svg class="ic"><use href="#s-track"/></svg></button>
                <button class="on" aria-label="Object snap"><svg class="ic"><use href="#s-osnap"/></svg></button>
                <button class="only-caret" aria-label="Snap options"><i class="caret"></i></button>
                <button aria-label="Selection cycling"><svg class="ic"><use href="#s-sel"/></svg></button>
                <button aria-label="Annotation visibility"><svg class="ic"><use href="#s-anno"/></svg></button>
                <button aria-label="Auto scale"><svg class="ic"><use href="#s-annoauto"/></svg></button>
                <button aria-label="Viewport lock"><svg class="ic"><use href="#s-lock"/></svg></button>
                <button aria-label="Viewport scale"><svg class="ic"><use href="#s-scale"/></svg></button>
                <button class="label dim-label">13.333333<i class="caret"></i></button>
                <button class="on" aria-label="Viewport max"><svg class="ic"><use href="#s-auto"/></svg></button>
                <button class="drop" aria-label="Workspace"><svg class="ic"><use href="#gear"/></svg><i class="caret"></i></button>
                <button aria-label="Annotation monitor"><svg class="ic"><use href="#s-plus"/></svg></button>
                <button class="drop" aria-label="Lock UI"><svg class="ic"><use href="#s-win"/></svg><i class="caret"></i></button>
                <button aria-label="Isolate objects"><svg class="ic"><use href="#s-units"/></svg></button>
                <button class="on" aria-label="Graphics performance"><svg class="ic"><use href="#s-circ"/></svg></button>
                <button aria-label="Hardware"><svg class="ic"><use href="#s-hw"/></svg></button>
                <button aria-label="Clean screen"><svg class="ic"><use href="#s-full"/></svg></button>
                <button aria-label="Customization"><svg class="ic"><use href="#s-menu"/></svg></button>
            </div>
        </footer>
    </div>

    <script>
        // name, swatch, color label, linetype, lineweight, bold line
        const layers = [
            ["0", "#000", "wh...", "Continu...", "Defa."],
            ["0.13", "#000", "wh...", "Continu...", "Defa."],
            ["AR_ejes", "#808080", "8", "DASHDO...", "0.13.."],
            ["AR_escalera", "#99004c", "232", "Continu...", "0.13.."],
            ["AR_hatch", "#000", "wh...", "Continu...", "0.13.."],
            ["AR_Manzana_Lote", "#ff7f00", "30", "ACAD_IS...", "0.30..", true],
            ["AR_mobiliario", "#808080", "8", "Continu...", "0.09.."],
            ["AR_mobiliario_fijo", "#808080", "8", "Continu...", "0.09.."],
            ["AR_muros", "#001372", "164", "Continu...", "0.30..", true],
            ["AR_niveles", "#000", "wh...", "Continu...", "0.25.."],
            ["AR_proyecciones", "#808080", "8", "HIDDEN", "0.13.."],
            ["AR_puertas", "#f0f", "ma...", "Continu...", "0.09.."],
            ["AR_textos", "#000", "250", "Continu...", "0.13.."],
            ["AR_ventanas", "#00f", "blue", "Continu...", "0.09.."],
            ["Defpoints", "#ff7f7f", "11", "Continu...", "Defa."]
        ];

        const icon = id => `<svg class="ic"><use href="#${id}"/></svg>`;

        document.getElementById("layerRows").innerHTML = layers.map((layer, i) => `
            <tr class="${i === 0 ? "selected" : ""}">
                <td>${icon("sheet")}</td><td>${layer[0]}</td>
                <td>${icon("bulb")}</td><td>${icon("sun")}</td><td>${icon("unlock")}</td>
                <td><span class="swatch" style="background:${layer[1]}"></span>${layer[2]}</td>
                <td>${layer[3]}</td>
                <td><span class="weight ${layer[5] ? "bold" : ""}"></span>${layer[4]}</td>
            </tr>`).join("");

        const files = [
            "CASA ALVAREZ FINAL", "BETO FINAL", "Drawing1", "fosa septica",
            "CASA RODRIGO OROZCO Y MONICA VALDES FINAL",
            "CASA RODRIGO OROZCO Y MONICA VALDES FINAL (1)",
            "Guia", "ejercicio instalaciones", "plano topo",
            "CASA GABRIEL E IVONNE ANT 2", "GENERADORES", "PLANO OFICIAL - copia",
            "PLANO OFICIAL", "Casa RPolanco 29jul", "PLANO FINAL (1)",
            "EST-01 PEDREGAL DEL VALLE 11052020 (3)", "SRA DELFINA FINAL"
        ];

        document.getElementById("backupFiles").innerHTML = files.map(name =>
            `<li><i class="plus"></i>${icon("folderopen")}<span>${name}</span></li>`).join("");
    </script>
</body>
</html>
```
FILE: styles.css
```css
* {
    box-sizing: border-box;
}

body {
    margin: 0;
    padding: 14px 0;
    background: #000;
    color: #e6e9ec;
    font-family: "Noto Sans", "Open Sans", sans-serif;
    font-size: 8px;
    line-height: 12px;
}

button, input, select {
    margin: 0;
    padding: 0;
    border: 0;
    background: none;
    color: inherit;
    font: inherit;
    white-space: nowrap;
}

h2, h3, ul {
    margin: 0;
    padding: 0;
    font-size: 8px;
    font-weight: normal;
    list-style: none;
}

a {
    color: inherit;
    text-decoration: none;
}

.sprite {
    display: none;
}

.ic {
    width: 12px;
    height: 12px;
    flex: none;
    display: block;
}

.caret {
    flex: none;
    border: 3px solid transparent;
    border-top-color: #cdd1d5;
    border-bottom: 0;
}

.caret.small {
    border-width: 2px;
    border-bottom: 0;
}

.caret.right {
    border: 3px solid transparent;
    border-left-color: #e4e6e8;
    border-right: 0;
}

.caret.left {
    border: 3px solid transparent;
    border-right-color: #e4e6e8;
    border-left: 0;
}

.app {
    min-height: calc(100vh - 28px);
    display: flex;
    flex-direction: column;
    background: #222831;
}

/* Title bar */
.titlebar {
    display: flex;
    align-items: center;
    height: 14px;
}

.titlebar button {
    display: flex;
    align-items: center;
    gap: 3px;
}

.quick {
    flex: 17;
    display: flex;
    align-items: center;
    gap: 4px;
}

.quick .logo {
    margin: 0 5px 0 1px;
}

.quick .share {
    color: #8fc6ec;
    margin-left: 2px;
}

.doc-title {
    display: flex;
    gap: 8px;
}

.account {
    flex: 22;
    display: flex;
    align-items: center;
    justify-content: flex-end;
    gap: 5px;
}

.account input {
    width: 119px;
    height: 12px;
    padding: 0 2px;
    background: #434d5c;
    font-style: italic;
}

::placeholder {
    color: #b3b9c1;
    opacity: 1;
}

.user .caret {
    margin-left: 7px;
}

.help {
    border-left: 1px solid #3f464f;
    padding-left: 6px;
}

.help b {
    width: 11px;
    height: 11px;
    border-radius: 50%;
    background: #dfe2e4;
    color: #222831;
    line-height: 11px;
}

.window-buttons {
    display: flex;
    gap: 4px;
    margin-left: 37px;
}

/* Menus and tabs */
.menubar {
    display: flex;
    align-items: center;
    gap: 15px;
    height: 14px;
    padding-left: 8px;
    border-bottom: 1px solid #38404a;
    color: #c3c8cd;
}

.doc-buttons {
    display: flex;
    margin-left: auto;
}

.tabs {
    display: flex;
    align-items: flex-end;
    height: 16px;
    padding-left: 1px;
    color: #c3c8cd;
}

.tabs button {
    height: 14px;
    padding: 0 6px;
}

.tabs .active {
    background: #3b454f;
    color: #fff;
}

.tabs .context {
    padding: 0 5px;
    background: #1b6d8c;
    border: 1px solid #3b8eac;
    color: #fff;
    line-height: 10px;
}

.tabs .collapse {
    display: flex;
    align-items: center;
    gap: 3px;
    margin-left: 8px;
}

.collapse span {
    width: 10px;
    height: 6px;
    background: #e4e6e8;
}

/* Ribbon */
.ribbon {
    display: flex;
    height: 68px;
    background: #3b454f;
    border-bottom: 2px solid #272d37;
}

.panel {
    position: relative;
    padding-top: 3px;
    border-right: 1px solid #2c343d;
}

.panel-body {
    display: flex;
    height: 49px;
}

.panel-title {
    display: flex;
    align-items: center;
    justify-content: center;
    gap: 4px;
    height: 14px;
}

.panel .launcher {
    position: absolute;
    right: 2px;
    bottom: 4px;
}

.launcher svg, .panel-title svg {
    width: 7px;
    height: 7px;
}

.p-draw { width: 150px; }
.p-modify { width: 167px; padding-left: 4px; }
.p-annotation { width: 126px; padding-left: 2px; }
.p-layers { width: 182px; padding-left: 1px; }
.p-block { width: 109px; }
.p-properties { width: 177px; padding-left: 1px; }
.p-groups { width: 46px; }
.p-utilities { width: 65px; padding-left: 3px; }
.p-clipboard { width: 54px; padding-left: 2px; }
.p-view { width: 46px; padding-left: 4px; border: 0; }

.panel button {
    display: flex;
    align-items: center;
    gap: 3px;
    text-align: left;
}

.panel .big {
    flex-direction: column;
    justify-content: flex-start;
    gap: 0;
    width: 30px;
    line-height: 10px;
    text-align: center;
}

.big svg {
    width: 24px;
    height: 25px;
    flex: none;
}

.big .caret {
    margin-top: 3px;
}

.panel .big.wide {
    width: 34px;
}

.panel .big.wider {
    width: 40px;
}

.panel .on {
    background: #47637c;
    outline: 1px solid #6fa3c6;
}

.col button {
    height: 16px;
}

.col .caret {
    margin-left: 2px;
}

.w48 { width: 48px; }
.w46 { width: 46px; }

.end {
    margin-left: auto;
    padding-right: 4px;
}

.p-annotation .col {
    padding-left: 2px;
}

.combo {
    display: flex;
    align-items: center;
    gap: 3px;
    height: 14px;
    padding: 0 2px;
    background: #4a5368;
}

.combo select {
    flex: 1;
    min-width: 0;
    height: 12px;
    appearance: none;
    margin-left: 2px;
}

.swatch {
    display: inline-block;
    flex: none;
    width: 8px;
    height: 8px;
    border: 1px solid #20262e;
}

.swatch.blue {
    width: 9px;
    height: 9px;
    background: #0000fa;
    border: 0;
}

.layer-tools {
    flex: 1;
    padding: 0 1px 0 2px;
}

.layer-tools .combo {
    height: 15px;
    margin-bottom: 1px;
    padding-left: 1px;
    gap: 1px;
}

.tool-row {
    display: flex;
    align-items: center;
    gap: 4px;
    height: 16px;
    padding-left: 2px;
}

.props {
    flex: 1;
    padding: 0 2px;
}

.prop-row {
    display: flex;
    align-items: center;
    gap: 2px;
    height: 16px;
}

.prop-row .combo {
    flex: 1;
}

.prop-row .swatch {
    margin: 0 2px 0 6px;
    outline: 1px solid #8791a3;
}

.rule {
    width: 42px;
    border-top: 1px solid #e4e6e8;
}

.combo .rule + select {
    margin-left: 0;
}

/* Palettes */
.workspace {
    flex: 1;
    display: flex;
}

.palettes {
    width: 346px;
    flex: none;
    background: #3a444e;
    border-right: 2px solid #262c36;
}

.palette-title {
    display: flex;
    align-items: center;
    gap: 4px;
    height: 15px;
    padding-left: 3px;
    background: #2c323d;
    line-height: 14px;
}

.handle {
    height: 8px;
    border-left: 2px dotted #878e96;
}

.layer-head {
    display: flex;
    justify-content: space-between;
    align-items: flex-end;
    height: 20px;
    padding-left: 2px;
    padding-bottom: 1px;
}

.layer-search {
    display: flex;
    align-items: center;
    width: 84px;
    height: 11px;
    margin-bottom: 4px;
    background: #454e5b;
}

.layer-search input {
    flex: 1;
    min-width: 0;
    padding-left: 1px;
}

.layer-search svg {
    width: 10px;
    height: 10px;
}

.layer-toolbar {
    display: flex;
    align-items: center;
    gap: 4px;
    height: 15px;
    padding-right: 5px;
}

.sep {
    height: 11px;
    margin: 0 1px 0 0;
    border-left: 1px solid #59626c;
}

.push {
    margin-left: auto;
}

.layer-area {
    display: flex;
    height: 205px;
}

.filter-strip {
    display: flex;
    flex-direction: column;
    justify-content: space-between;
    align-items: center;
    width: 19px;
    border-right: 1px solid #2a313a;
    font-size: 16px;
}

.layer-list {
    flex: 1;
    min-width: 0;
}

.list-view {
    display: flex;
    height: 193px;
}

.table-clip {
    flex: 1;
    min-width: 0;
    overflow: hidden;
}

table {
    width: 315px;
    table-layout: fixed;
    border-collapse: collapse;
}

.c-status { width: 16px; }
.c-name { width: 120px; }
.c-on { width: 16px; }
.c-freeze { width: 28px; }
.c-lock { width: 20px; }
.c-color { width: 32px; }
.c-type { width: 43px; }
.c-weight { width: 40px; }

th {
    height: 15px;
    padding: 0 0 0 2px;
    background: #3e4858;
    border-right: 1px solid #2c343e;
    font-weight: normal;
    text-align: left;
    white-space: nowrap;
    overflow: hidden;
}

th:last-child {
    padding-left: 1px;
    border-right: 0;
}

.sorted::after {
    content: "";
    float: right;
    margin: 5px 2px 0 0;
    border: 2px solid transparent;
    border-bottom: 3px solid #dfe2e5;
    border-top: 0;
}

td {
    height: 12px;
    padding: 0 0 0 2px;
    line-height: 12px;
    white-space: nowrap;
    overflow: hidden;
}

td:last-child {
    padding-left: 1px;
}

td:nth-child(2) {
    border-right: 1px solid #2c343e;
}

td .ic {
    width: 10px;
    height: 10px;
}

td:nth-child(3) .ic, td:nth-child(4) .ic, td:nth-child(5) .ic {
    margin: 0 auto;
}

td .swatch {
    margin-right: 3px;
    vertical-align: -1px;
}

.selected td {
    background: #7486a3;
}

.weight {
    display: inline-block;
    width: 15px;
    margin-right: 3px;
    border-top: 1px solid #e4e6e8;
    vertical-align: 2px;
}

.weight.bold {
    border-top-width: 2px;
}

.vscroll {
    display: flex;
    flex-direction: column;
    align-items: center;
    width: 11px;
    background: #eeeeec;
}

.vscroll .thumb {
    width: 11px;
    height: 54px;
    background: #c6c6c6;
}

.hscroll {
    display: flex;
    align-items: center;
    height: 12px;
    background: #eeeeec;
}

.hscroll .thumb {
    width: 90px;
    height: 12px;
    background: #c6c6c6;
}

.chev {
    width: 4px;
    height: 4px;
    margin: 5px 4px 4px;
    border: solid #333;
    border-width: 1px 0 0 1px;
    transform: rotate(45deg);
}

.chev.down { margin-top: auto; transform: rotate(225deg); }
.chev.left { transform: rotate(-45deg); }
.chev.right { margin-left: auto; transform: rotate(135deg); }

.layer-foot {
    display: flex;
    align-items: center;
    gap: 3px;
    height: 25px;
    padding-top: 6px;
}

.section-title {
    display: flex;
    align-items: center;
    justify-content: space-between;
    height: 16px;
    padding: 0 4px 0 5px;
    background: #2c323d;
    border-top: 1px solid #222831;
    font-weight: bold;
}

.section-title.closed {
    height: 20px;
    border-top: 4px solid #363e49;
    color: #c5c9ce;
}

.backup {
    height: 210px;
    border-bottom: 3px solid #2c323d;
}

.backup ul {
    flex: 1;
}

.backup .vscroll .thumb {
    height: 72px;
}

.backup li {
    display: flex;
    align-items: center;
    gap: 3px;
    height: 12px;
    padding-left: 4px;
}

.plus {
    width: 6px;
    height: 6px;
    background:
        linear-gradient(#333, #333) center / 4px 1px no-repeat,
        linear-gradient(#333, #333) center / 1px 4px no-repeat,
        #d8dbde;
}

/* Drawing area */
.stage {
    flex: 1;
    min-width: 0;
    display: flex;
    flex-direction: column;
    background: #fffffc;
}

.drawing {
    flex: 1;
    width: 100%;
    height: 0;
    min-height: 0;
    display: block;
    overflow: hidden;
    fill: none;
    font-family: "Liberation Sans", Arial, sans-serif;
}

.axis {
    stroke: #a9a9a9;
}

.bubble {
    stroke: #999;
}

.grey-fill, .grey-text {
    fill: #7f7f7f;
}

.axis-no {
    font-size: 44px;
    text-anchor: middle;
}

.dim-no {
    font-size: 33px;
    text-anchor: middle;
}

.note {
    fill: #111;
    font-size: 18px;
}

.wall {
    stroke: #000f66;
    stroke-width: 2;
}

.footing {
    stroke: #0000f5;
    stroke-width: 13;
}

.column {
    fill: #0000f5;
}

.dim {
    stroke: #1c1699;
}

.blue-text {
    fill: #0000cd;
    font-size: 36px;
}

.blue-text .dim-no {
    font-size: 33px;
}

.start circle, .start path {
    stroke: #d8304e;
}

.start text {
    fill: #b90f1c;
    font-size: 18px;
}

.cursor {
    stroke: #333;
}

.command {
    display: flex;
    height: 41px;
    border-top: 2px solid #2b313c;
}

.command-side {
    display: flex;
    flex-direction: column;
    align-items: center;
    gap: 5px;
    width: 17px;
    padding-top: 3px;
    background: #2b313c;
}

.grip {
    width: 12px;
    height: 3px;
    background: repeating-linear-gradient(90deg, #b4b9be 0 1px, #2b313c 1px 2px);
}

.command-side .ic {
    width: 10px;
    height: 10px;
}

.command-main {
    flex: 1;
    display: flex;
    flex-direction: column;
    color: #111;
    font-family: "Liberation Mono", monospace;
}

.history {
    height: 26px;
    padding: 4px 0 0 2px;
    background: #c8c8c4;
    border-bottom: 1px solid #8c8c8a;
    line-height: 10px;
}

.command-line {
    flex: 1;
    display: flex;
    align-items: center;
    gap: 3px;
    padding-left: 3px;
    background: #fff;
}

.command-line .caret {
    border-top-color: #333;
}

.command-line input {
    flex: 1;
    font-style: italic;
}

.command-line ::placeholder {
    color: #666;
}

/* Status bar */
.statusbar {
    display: flex;
    justify-content: space-between;
    height: 19px;
}

.layouts {
    display: flex;
    align-items: flex-start;
    gap: 3px;
    padding-left: 8px;
    color: #c3c8cd;
}

.layouts button {
    height: 12px;
    padding: 0 6px;
    background: #2b323b;
    border-radius: 0 0 5px 5px;
}

.layouts .active {
    background: #3f4954;
    color: #fff;
    font-weight: bold;
}

.tray {
    display: flex;
    gap: 1px;
}

.tray button {
    display: flex;
    align-items: center;
    justify-content: center;
    width: 16px;
    background: #37404a;
}

.tray .drop {
    width: 26px;
    gap: 2px;
}

.tray .only-caret {
    width: 10px;
}

.tray .label {
    width: 32px;
}

.tray .dim-label {
    width: 50px;
    gap: 3px;
    color: #a0a6ad;
}

.tray .on {
    background: #5484b4;
}
```
